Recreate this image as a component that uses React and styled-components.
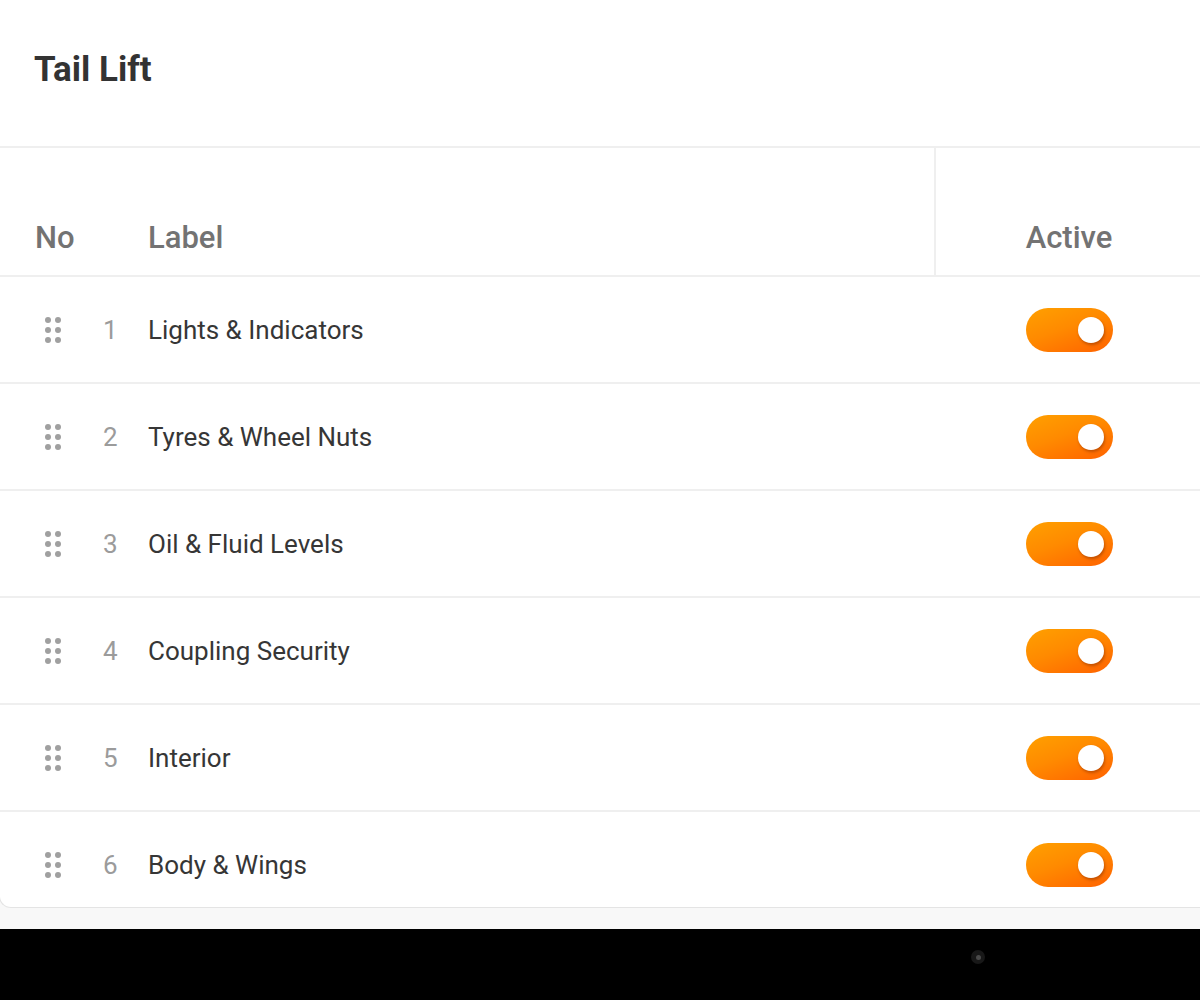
import React from "react";
import styled, { createGlobalStyle } from "styled-components";

const Global = createGlobalStyle`
  html, body { margin: 0; padding: 0; }
  body {
    background: #f8f8f8;
    font-family: Roboto, "Noto Sans", "Liberation Sans", sans-serif;
    overflow: hidden;
  }
`;

const Page = styled.div`
  display: flex;
  flex-direction: column;
  height: 1000px;
  width: 1200px;
  overflow: hidden;
`;

const Card = styled.div`
  width: 1203px;
  margin-left: -1px;
  height: 908px;
  box-sizing: border-box;
  background: #ffffff;
  border: 1px solid #e4e4e4;
  border-top: none;
  border-right: none;
  border-bottom-left-radius: 12px;
  overflow: hidden;
  flex-shrink: 0;
  display: flex;
  flex-direction: column;
`;

const TitleBar = styled.div`
  flex-shrink: 0;
  display: flex;
  align-items: center;
  padding-left: 34px;
  border-bottom: 2px solid #efefef;
  box-sizing: border-box;
  height: 148px;
`;

const Title = styled.h1`
  margin: 0;
  font-size: 35px;
  font-weight: 700;
  color: #333333;
  padding-bottom: 8px;
`;

const HeaderRow = styled.div`
  display: flex;
  height: 129px;
  flex-shrink: 0;
  box-sizing: border-box;
  border-bottom: 2px solid #efefef;
`;

const HeadCell = styled.div`
  display: flex;
  align-items: flex-end;
  padding-bottom: 19px;
  box-sizing: border-box;
  font-size: 31px;
  font-weight: 500;
  color: #737373;
  ${(p) => (p.$w ? `width: ${p.$w}px; flex-shrink: 0;` : "flex: 1;")}
  ${(p) => (p.$pl ? `padding-left: ${p.$pl}px;` : "")}
  ${(p) => (p.$center ? "justify-content: center; border-left: 2px solid #efefef;" : "")}
`;

const Row = styled.div`
  display: flex;
  align-items: center;
  height: 107px;
  flex-shrink: 0;
  box-sizing: border-box;
  border-bottom: 2px solid #efefef;
`;

const NoCell = styled.div`
  width: 134px;
  flex-shrink: 0;
  display: flex;
  align-items: center;
  padding-left: 45px;
  box-sizing: border-box;
`;

const Handle = styled.div`
  display: grid;
  grid-template-columns: repeat(2, 6px);
  grid-auto-rows: 6px;
  gap: 4px;
  margin-right: 42px;
  & > span {
    width: 6px;
    height: 6px;
    border-radius: 50%;
    background: #a0a0a0;
  }
`;

const Num = styled.span`
  font-size: 26px;
  color: #9b9b9b;
`;

const LabelCell = styled.div`
  flex: 1;
  padding-left: 14px;
  font-size: 26px;
  color: #363636;
`;

const ActiveCell = styled.div`
  width: 268px;
  flex-shrink: 0;
  display: flex;
  justify-content: center;
  padding-left: 2px;
  box-sizing: border-box;
`;

const Toggle = styled.div`
  width: 87px;
  height: 44px;
  border-radius: 22px;
  background: linear-gradient(160deg, #ffa000 0%, #ff8a00 45%, #ff6200 100%);
  display: flex;
  align-items: center;
  justify-content: flex-end;
  padding-right: 9px;
  box-sizing: border-box;
`;

const Knob = styled.div`
  width: 26px;
  height: 26px;
  border-radius: 50%;
  background: #ffffff;
  box-shadow: 1px 2px 3px rgba(120, 40, 0, 0.45);
`;

const Gap = styled.div`
  height: 21px;
  flex-shrink: 0;
  background: #f8f8f8;
`;

const DeviceBar = styled.div`
  flex: 1;
  background: #000000;
  display: flex;
  align-items: center;
  padding-left: 971px;
  padding-bottom: 15px;
`;

const Camera = styled.div`
  width: 14px;
  height: 14px;
  border-radius: 50%;
  background: #181818;
  display: flex;
  align-items: center;
  justify-content: center;
  & > span {
    width: 5px;
    height: 5px;
    border-radius: 50%;
    background: #4a4a4a;
  }
`;

const items = [
  "Lights & Indicators",
  "Tyres & Wheel Nuts",
  "Oil & Fluid Levels",
  "Coupling Security",
  "Interior",
  "Body & Wings",
];

export default function App() {
  return (
    <>
      <Global />
      <Page>
        <Card>
          <TitleBar>
            <Title>Tail Lift</Title>
          </TitleBar>
          <HeaderRow>
            <HeadCell $w={134} $pl={35}>No</HeadCell>
            <HeadCell $pl={14}>Label</HeadCell>
            <HeadCell $w={268} $center>Active</HeadCell>
          </HeaderRow>
          {items.map((label, i) => (
            <Row key={label}>
              <NoCell>
                <Handle>
                  {Array.from({ length: 6 }).map((_, k) => (
                    <span key={k} />
                  ))}
                </Handle>
                <Num>{i + 1}</Num>
              </NoCell>
              <LabelCell>{label}</LabelCell>
              <ActiveCell>
                <Toggle>
                  <Knob />
                </Toggle>
              </ActiveCell>
            </Row>
          ))}
        </Card>
        <Gap />
        <DeviceBar>
          <Camera>
            <span />
          </Camera>
        </DeviceBar>
      </Page>
    </>
  );
}
